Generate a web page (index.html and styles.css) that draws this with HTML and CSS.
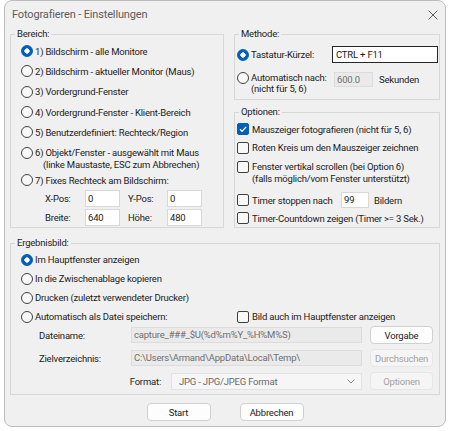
FILE: index.html
```html
<!DOCTYPE html>
<html lang="de">
<head>
  <meta charset="UTF-8">
  <title>Fotografieren - Einstellungen</title>
  <link rel="stylesheet" href="styles.css">
</head>
<body>
<div class="window">
  <div class="titlebar">
    <span class="title">Fotografieren - Einstellungen</span>
    <svg class="close" width="10" height="10" viewBox="0 0 10 10"><path d="M0.5 0.5L9.5 9.5M9.5 0.5L0.5 9.5" stroke="#5e5e5e" stroke-width="1"/></svg>
  </div>

  <div class="dialog">
    <div class="top">
      <!-- Bereich -->
      <fieldset class="group area">
        <legend>Bereich:</legend>
        <div class="body">
          <div class="opt"><span class="radio on"></span>1) Bildschirm - alle Monitore</div>
          <div class="opt"><span class="radio"></span>2) Bildschirm - aktueller Monitor (Maus)</div>
          <div class="opt tall"><span class="radio"></span>3) Vordergrund-Fenster</div>
          <div class="opt"><span class="radio"></span>4) Vordergrund-Fenster - Klient-Bereich</div>
          <div class="opt"><span class="radio"></span>5) Benutzerdefiniert: Rechteck/Region</div>
          <div class="opt multi"><span class="radio"></span><span class="lines">6) Objekt/Fenster - ausgewählt mit Maus<span class="indent">(linke Maustaste, ESC zum Abbrechen)</span></span></div>
          <div class="opt short"><span class="radio"></span>7) Fixes Rechteck am Bildschirm:</div>
          <div class="coords">
            <span>X-Pos:</span><span class="edit">0</span>
            <span>Y-Pos:</span><span class="edit">0</span>
            <span>Breite:</span><span class="edit">640</span>
            <span>Höhe:</span><span class="edit">480</span>
          </div>
        </div>
      </fieldset>

      <div class="side">
        <!-- Methode -->
        <fieldset class="group method">
          <legend>Methode:</legend>
          <div class="body">
            <div class="opt key"><span class="radio on"></span>Tastatur-Kürzel:<span class="edit hotkey">CTRL + F11</span></div>
            <div class="opt multi auto">
              <span class="radio"></span>
              <span class="lines auto-text">Automatisch nach:<span>(nicht für 5, 6)</span></span>
              <span class="delay"><span class="edit off seconds">600.0</span>Sekunden</span>
            </div>
          </div>
        </fieldset>

        <!-- Optionen -->
        <fieldset class="group options">
          <legend>Optionen:</legend>
          <div class="body">
            <div class="opt o1"><span class="check on"><svg width="10" height="10" viewBox="0 0 10 10"><path d="M2 5.2L4.1 7.3L8.2 2.9" fill="none" stroke="#fff" stroke-width="1.3"/></svg></span>Mauszeiger fotografieren (nicht für 5, 6)</div>
            <div class="opt o2"><span class="check"></span>Roten Kreis um den Mauszeiger zeichnen</div>
            <div class="opt multi o3"><span class="check"></span><span class="lines">Fenster vertikal scrollen (bei Option 6)<span>(falls möglich/vom Fenster unterstützt)</span></span></div>
            <div class="opt o4"><span class="check"></span><span class="timer-label">Timer stoppen nach</span><span class="edit frames">99</span>Bildern</div>
            <div class="opt o5"><span class="check"></span>Timer-Countdown zeigen (Timer &gt;= 3 Sek.)</div>
          </div>
        </fieldset>
      </div>
    </div>

    <!-- Ergebnisbild -->
    <fieldset class="group result">
      <legend>Ergebnisbild:</legend>
      <div class="body">
        <div class="opt row"><span class="radio on"></span>Im Hauptfenster anzeigen</div>
        <div class="opt row"><span class="radio"></span>In die Zwischenablage kopieren</div>
        <div class="opt row"><span class="radio"></span>Drucken (zuletzt verwendeter Drucker)</div>
        <div class="save-row">
          <div class="opt row"><span class="radio"></span>Automatisch als Datei speichern:</div>
          <div class="opt row"><span class="check"></span>Bild auch im Hauptfenster anzeigen</div>
        </div>
        <div class="files">
          <span class="file-label">Dateiname:</span>
          <span class="edit off path">capture_###_$U(%d%m%Y_%H%M%S)</span>
          <button class="btn">Vorgabe</button>

          <span class="file-label">Zielverzeichnis:</span>
          <span class="edit off path">C:\Users\Armand\AppData\Local\Temp\</span>
          <button class="btn" disabled>Durchsuchen</button>

          <span class="format">
            <span class="format-label">Format:</span>
            <span class="combo">JPG - JPG/JPEG Format<svg width="8" height="5" viewBox="0 0 8 5"><path d="M0.5 0.5L4 4L7.5 0.5" fill="none" stroke="#8a8a8a" stroke-width="1"/></svg></span>
          </span>
          <button class="btn" disabled>Optionen</button>
        </div>
      </div>
    </fieldset>

    <div class="actions">
      <button class="btn main">Start</button>
      <button class="btn main">Abbrechen</button>
    </div>
  </div>
</div>
</body>
</html>
```

FILE: styles.css
```css
* {
  box-sizing: border-box;
}

body {
  margin: 0;
  background: #fff;
  font-family: Roboto, "Liberation Sans", sans-serif;
  font-size: 9.5px;
  letter-spacing: -0.2px;
  color: #1b1b1b;
}

.window {
  margin-left: 4px;
  width: 442px;
  height: 427px;
  background: #f0f0f0;
  border: 1px solid #bdbdbd;
  border-radius: 8px;
}

.titlebar {
  height: 27px;
  display: flex;
  align-items: center;
  justify-content: space-between;
  padding: 0 7px 0 7px;
}

.title {
  font-size: 11px;
  letter-spacing: -0.15px;
  color: #5c5c5c;
}

.dialog {
  padding: 0 5px;
}

.top {
  display: grid;
  grid-template-columns: 214px 206px;
  column-gap: 10px;
}

/* group boxes */
.group {
  margin: 0;
  padding: 0;
  min-width: 0;
  border: 1px solid #d7d7d7;
}

.group legend {
  margin-left: 4px;
  padding: 0 2px;
  line-height: 12px;
}

.side {
  display: flex;
  flex-direction: column;
  gap: 6px;
}

.options {
  flex: 1;
}

/* radio / checkbox rows */
.opt {
  display: flex;
  align-items: center;
  height: 20px;
  white-space: nowrap;
}

.opt.multi {
  align-items: flex-start;
  height: auto;
}

.lines {
  display: flex;
  flex-direction: column;
  line-height: 12px;
}

.indent {
  padding-left: 8px;
}

.radio {
  flex: none;
  width: 12px;
  height: 12px;
  margin-right: 2px;
  border: 1px solid #404040;
  border-radius: 50%;
  background: #f8f8f8;
}

.radio.on {
  border-color: #005fb8;
  background: radial-gradient(circle, #fff 0 2.4px, #005fb8 2.9px);
}

.check {
  flex: none;
  width: 12px;
  height: 12px;
  margin-right: 3px;
  border: 1px solid #404040;
  border-radius: 2px;
  background: #f8f8f8;
  display: flex;
}

.check.on {
  border-color: #005fb8;
  background: #005fb8;
}

.edit {
  display: block;
  height: 17px;
  padding: 0 2px;
  line-height: 15px;
  background: #fff;
  border: 1px solid #d8d8d8;
  white-space: nowrap;
  overflow: hidden;
}

.edit.off {
  background: #eaeaea;
  border-color: #dcdcdc;
  color: #6f6f6f;
}

/* Bereich */
.area .body {
  padding: 1px 0 0 10px;
}

.area .opt.tall {
  height: 21px;
}

.area .opt.multi {
  padding-top: 5px;
}

.area .opt.short {
  height: 18px;
}

.coords {
  display: grid;
  grid-template-columns: 32px 35px 31px 35px;
  column-gap: 8px;
  row-gap: 2px;
  align-items: center;
  margin: 1px 0 0 24px;
}

/* Methode */
.method .body {
  padding: 6px 1px 5px 2px;
}

.key {
  height: 17px;
}

.hotkey {
  margin-left: auto;
  width: 106px;
  border-color: #262626;
  padding-left: 3px;
}

.auto {
  margin-top: 9px;
}

.auto-text {
  width: 83px;
  line-height: 11px;
}

.delay {
  display: flex;
  align-items: center;
  gap: 6px;
  height: 15px;
}

.seconds {
  width: 39px;
  height: 15px;
  line-height: 13px;
}

/* Optionen */
.options .body {
  padding: 2px 0 0 2px;
}

.o1 { height: 18px; }
.o2 { height: 19px; }
.o3 { padding-top: 4px; }
.o4 { height: 16px; margin-top: 7px; }
.o5 { height: 18px; margin-top: 1px; }

.timer-label {
  width: 89px;
}

.frames {
  width: 28px;
  height: 16px;
  line-height: 14px;
  margin-right: 5px;
}

/* Ergebnisbild */
.result {
  margin-top: 9px;
}

.result .body {
  padding: 1px 0 4px 10px;
}

.opt.row {
  height: 19px;
}

.save-row {
  display: grid;
  grid-template-columns: 216px auto;
}

.files {
  display: grid;
  grid-template-columns: 92px 231px 71px;
  grid-auto-rows: 18px;
  row-gap: 5px;
  align-items: center;
  margin-left: 18px;
}

.path {
  height: 16px;
  line-height: 14px;
}

.format {
  grid-column: 1 / 3;
  display: flex;
  justify-content: flex-end;
  align-items: center;
}

.format-label {
  margin-right: 10px;
}

.combo {
  width: 191px;
  height: 17px;
  display: flex;
  align-items: center;
  justify-content: space-between;
  padding: 0 6px 0 7px;
  background: #f6f6f6;
  border: 1px solid #e2e2e2;
  color: #6a6a6a;
}

/* push buttons */
.btn {
  height: 18px;
  margin: 0;
  padding: 0;
  font: inherit;
  letter-spacing: inherit;
  color: #1b1b1b;
  background: #fdfdfd;
  border: 1px solid #d0d0d0;
  border-radius: 4px;
}

.files .btn {
  width: 63px;
  margin-left: 8px;
}

.btn:disabled {
  background: #f5f5f5;
  border-color: #e6e6e6;
  color: #a2a2a2;
}

.actions {
  display: flex;
  justify-content: center;
  gap: 29px;
  margin-top: 8px;
}

.btn.main {
  width: 64px;
}
```
